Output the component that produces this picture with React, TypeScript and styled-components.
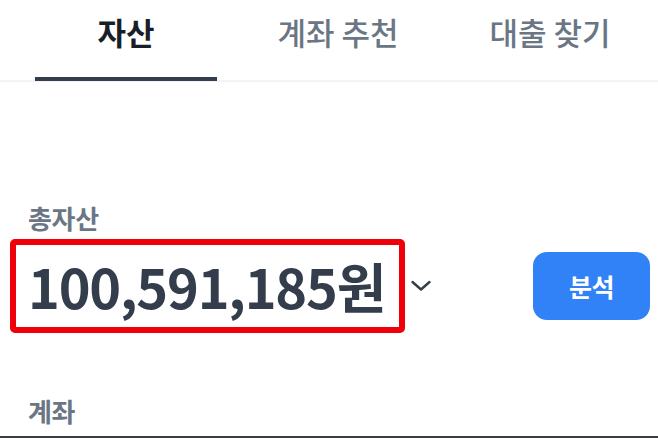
import React, { useState } from "react";
import styled, { createGlobalStyle } from "styled-components";

const GlobalStyle = createGlobalStyle`
  html, body {
    margin: 0;
    padding: 0;
    background: #ffffff;
  }
  body {
    font-family: "Noto Sans CJK KR", "Noto Sans", sans-serif;
    -webkit-font-smoothing: antialiased;
  }
`;

const TABS = ["자산", "계좌 추천", "대출 찾기"];

const Page = styled.div`
  width: 658px;
  height: 438px;
  overflow: hidden;
  display: flex;
  flex-direction: column;
`;

const TabBar = styled.nav`
  display: flex;
  gap: 30px;
  padding: 0 17px 0 35px;
  height: 82px;
  border-bottom: 2px solid #f2f4f6;
  box-sizing: border-box;
`;

const Tab = styled.button<{ $active: boolean }>`
  flex: 0 0 182px;
  margin: 0 0 -1px;
  background: none;
  border: none;
  border-bottom: 4px solid ${(p) => (p.$active ? "#333d4b" : "transparent")};
  font-family: inherit;
  font-size: 31px;
  line-height: 40px;
  font-weight: ${(p) => (p.$active ? 700 : 500)};
  color: ${(p) => (p.$active ? "#191f28" : "#6b7684")};
  cursor: pointer;
  display: flex;
  align-items: flex-start;
  justify-content: center;
  padding: 12px 0 0;
  box-sizing: border-box;
`;

const Content = styled.section`
  padding: 0 8px 0 28px;
  display: flex;
  flex-direction: column;
`;

const Label = styled.div`
  font-size: 26px;
  font-weight: 600;
  color: #6b7684;
  line-height: 34px;
  letter-spacing: -0.3px;
`;

const AssetLabel = styled(Label)`
  margin-top: 119px;
`;

const AccountLabel = styled(Label)`
  margin-top: 61px;
`;

const SummaryRow = styled.div`
  display: flex;
  align-items: center;
  margin-top: 4px;
`;

const Highlight = styled.div`
  margin-left: -18px;
  border: 6px solid #f0000a;
  border-radius: 5px;
  padding: 0 14px 0 12px;
  height: 94px;
  box-sizing: border-box;
  display: flex;
  align-items: center;
`;

const Amount = styled.span`
  font-size: 54px;
  font-weight: 600;
  color: #333d4b;
  letter-spacing: -1.2px;
  line-height: 1;
`;

const ToggleButton = styled.button`
  background: none;
  border: none;
  padding: 0;
  margin-left: 4px;
  display: flex;
  align-items: center;
  color: #333d4b;
  cursor: pointer;
`;

const AnalyzeButton = styled.button`
  margin-left: auto;
  width: 117px;
  height: 68px;
  border: none;
  border-radius: 14px;
  background: #3182f6;
  color: #ffffff;
  font-family: inherit;
  font-size: 25px;
  font-weight: 600;
  letter-spacing: -0.5px;
  cursor: pointer;
`;

const BottomEdge = styled.div`
  margin-top: 8px;
  border-top: 2px solid #3a3d42;
`;

const Chevron = () => (
  <svg width="24" height="24" viewBox="0 0 24 24" fill="none">
    <path
      d="M3.5 8l8.5 7.5 8.5-7.5"
      stroke="currentColor"
      strokeWidth="2.4"
      strokeLinecap="round"
      strokeLinejoin="round"
    />
  </svg>
);

export default function App() {
  const [activeTab, setActiveTab] = useState(0);

  return (
    <Page>
      <GlobalStyle />
      <TabBar>
        {TABS.map((tab, index) => (
          <Tab
            key={tab}
            $active={activeTab === index}
            onClick={() => setActiveTab(index)}
          >
            {tab}
          </Tab>
        ))}
      </TabBar>
      <Content>
        <AssetLabel>총자산</AssetLabel>
        <SummaryRow>
          <Highlight>
            <Amount>100,591,185원</Amount>
          </Highlight>
          <ToggleButton aria-label="자산 펼치기">
            <Chevron />
          </ToggleButton>
          <AnalyzeButton>분석</AnalyzeButton>
        </SummaryRow>
        <AccountLabel>계좌</AccountLabel>
      </Content>
      <BottomEdge />
    </Page>
  );
}
